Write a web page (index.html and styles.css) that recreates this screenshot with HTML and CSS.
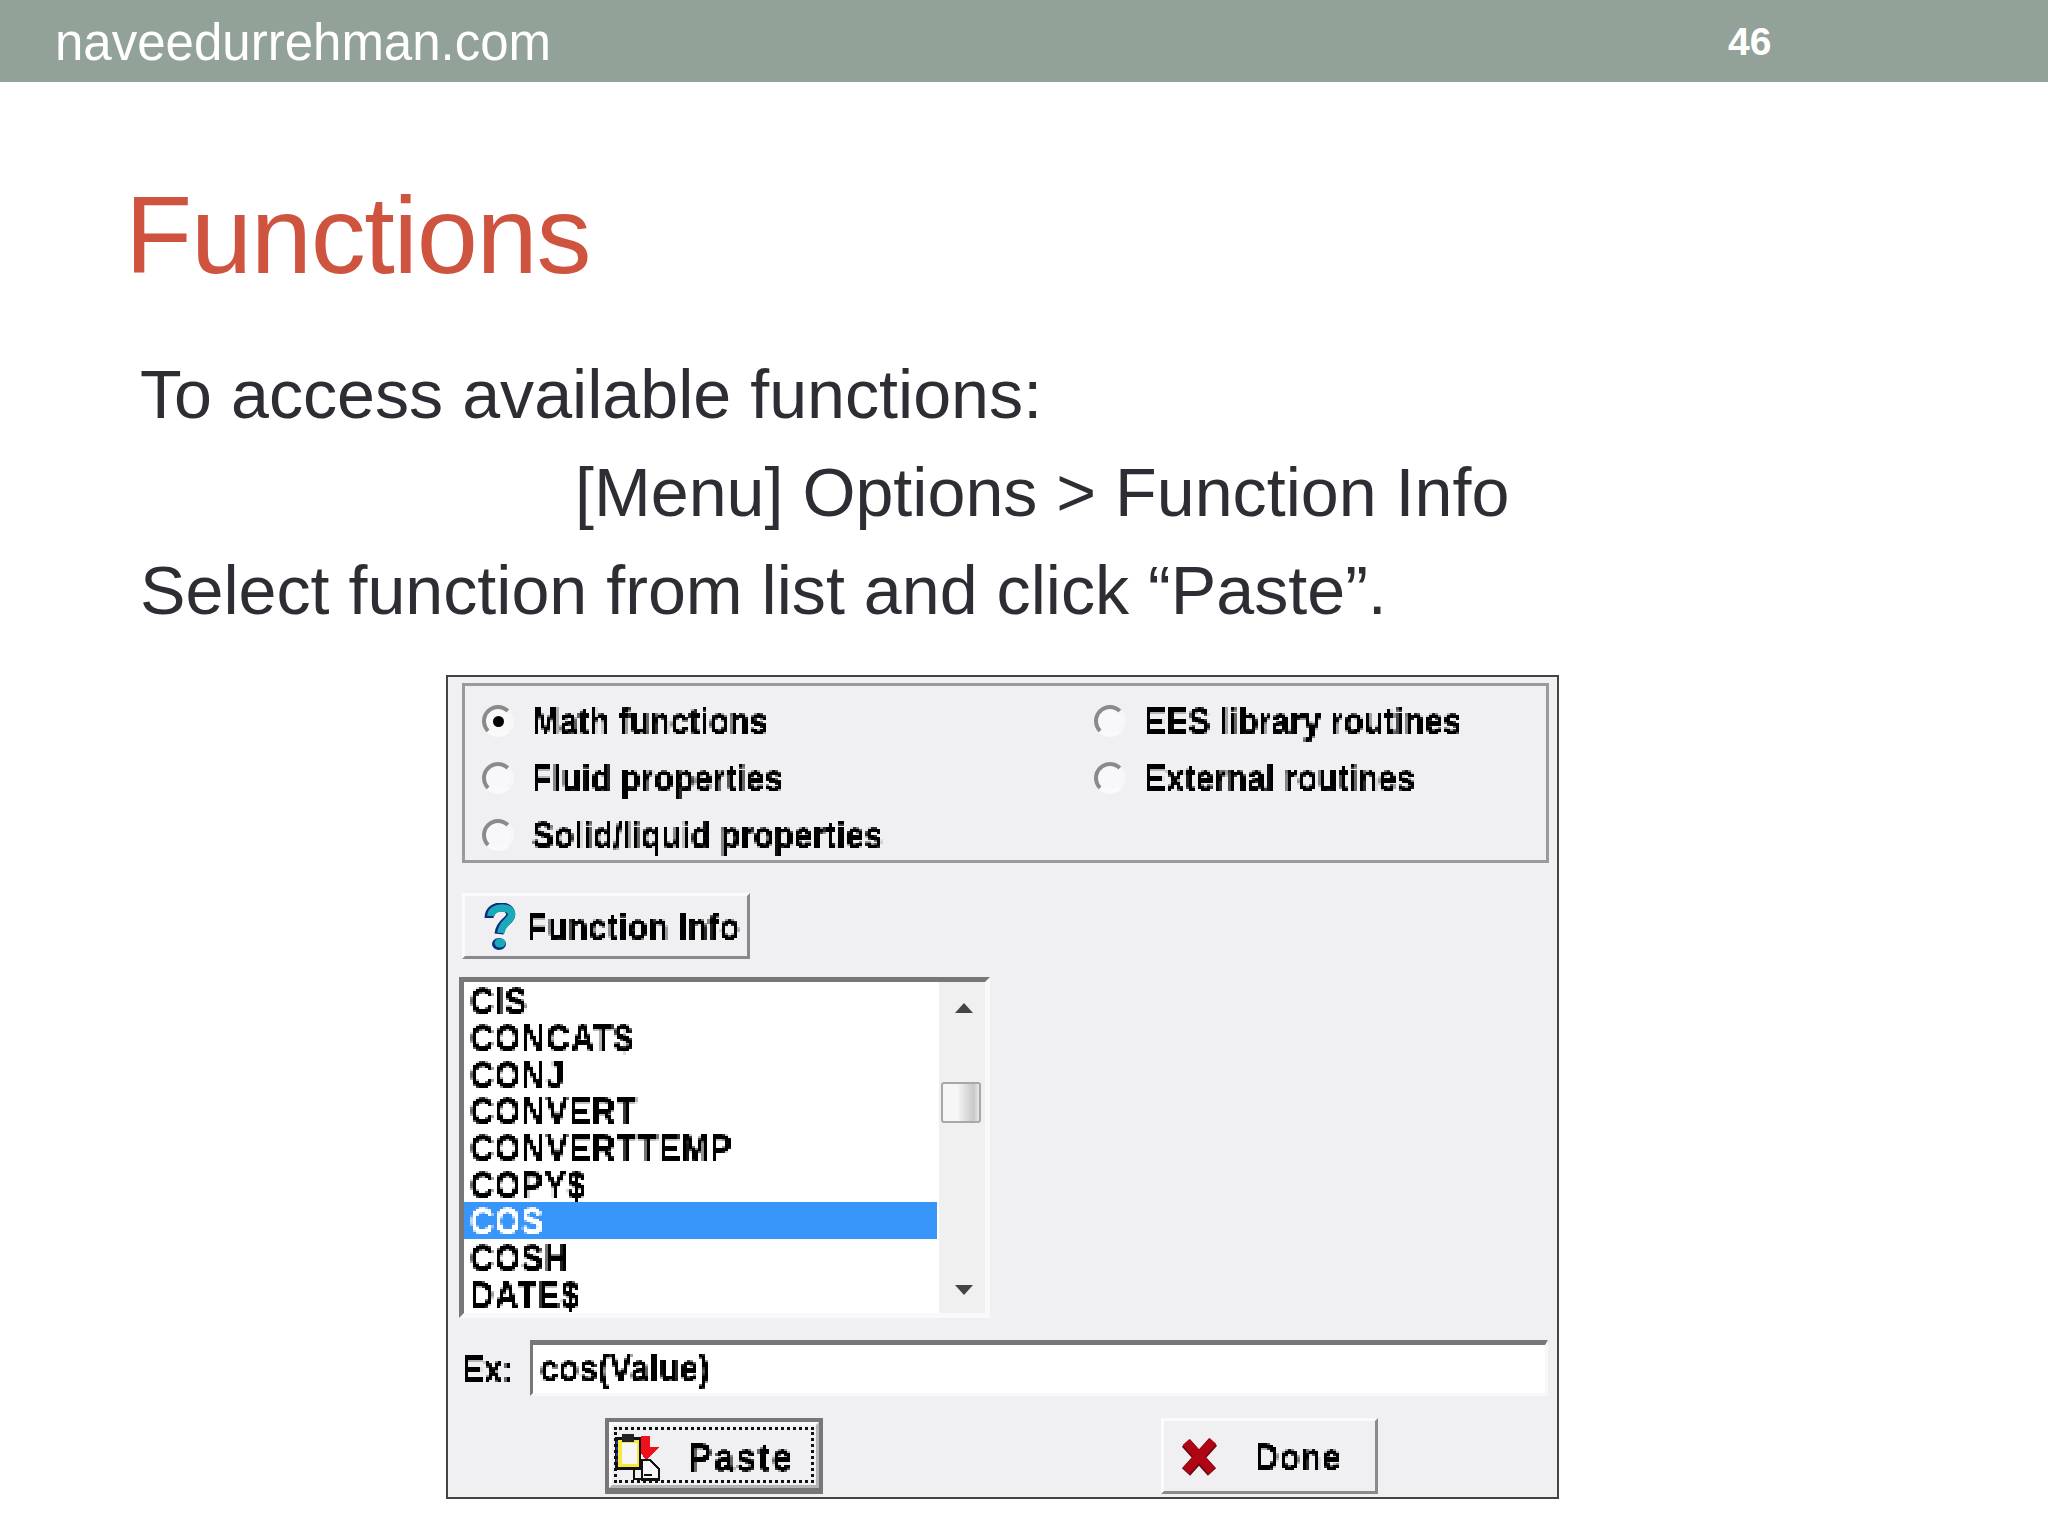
FILE: index.html
```html
<!DOCTYPE html>
<html lang="en">
<head>
<meta charset="utf-8">
<title>Functions</title>
<link rel="stylesheet" href="styles.css">
</head>
<body>
<svg class="defs" width="0" height="0" aria-hidden="true">
  <filter id="px" x="-5%" y="-15%" width="110%" height="130%" color-interpolation-filters="sRGB">
    <feFlood x="1" y="1" width="1" height="1"/>
    <feComposite width="3" height="3"/>
    <feTile result="grid"/>
    <feComposite in="SourceGraphic" in2="grid" operator="in"/>
    <feMorphology operator="dilate" radius="1"/>
    <feGaussianBlur stdDeviation="0.5"/>
  </filter>
</svg>
<header class="bar">
  <span class="site">naveedurrehman.com</span>
  <span class="num">46</span>
</header>
<main class="slide">
  <h1 class="title">Functions</h1>
  <div class="body">
    <p class="line">To access available functions:</p>
    <p class="line indent">[Menu] Options &gt; Function Info</p>
    <p class="line">Select function from list and click “Paste”.</p>
  </div>
  <section class="dialog">
    <div class="group">
      <div class="opt"><span class="radio on"></span><span class="t lab">Math functions</span></div>
      <div class="opt"><span class="radio"></span><span class="t lab">EES library routines</span></div>
      <div class="opt"><span class="radio"></span><span class="t lab">Fluid properties</span></div>
      <div class="opt"><span class="radio"></span><span class="t lab">External routines</span></div>
      <div class="opt"><span class="radio"></span><span class="t lab">Solid/liquid properties</span></div>
    </div>
    <div class="btn info">
      <svg class="ico-q" viewBox="0 0 32 47">
        <g fill="none">
          <path d="M5 15C5 7 11 4 17 4C25 4 28 9 26 14C24 19 16 20 15 31" stroke="#0b2a80" stroke-width="9"/>
          <path d="M7 13C7 8 12 5 18 5C26 5 29 9 27 14C25 19 18 20 17 30" stroke="#1aa9b8" stroke-width="7.5"/>
        </g>
        <ellipse cx="15" cy="41" rx="7" ry="6" fill="#0b2a80"/>
        <ellipse cx="16" cy="40" rx="5.5" ry="4.5" fill="#1aa9b8"/>
      </svg>
      <span class="t fi">Function Info</span>
    </div>
    <div class="list">
      <div class="rows">
        <div class="row"><span class="t caps">CIS</span></div>
        <div class="row"><span class="t caps">CONCAT$</span></div>
        <div class="row"><span class="t caps">CONJ</span></div>
        <div class="row"><span class="t caps">CONVERT</span></div>
        <div class="row"><span class="t caps">CONVERTTEMP</span></div>
        <div class="row"><span class="t caps">COPY$</span></div>
        <div class="row sel"><span class="t caps">COS</span></div>
        <div class="row"><span class="t caps">COSH</span></div>
        <div class="row"><span class="t caps">DATE$</span></div>
      </div>
      <div class="scroll">
        <span class="arrow up"></span>
        <span class="thumb"></span>
        <span class="arrow down"></span>
      </div>
    </div>
    <div class="ex">
      <span class="t ex-label">Ex:</span>
      <div class="input"><span class="t val">cos(Value)</span></div>
    </div>
    <div class="actions">
      <div class="paste">
        <div class="paste-in">
          <div class="focus">
            <svg class="ico-p" viewBox="0 0 46 50" shape-rendering="crispEdges">
              <rect x="1" y="4" width="26" height="33" fill="#111"/>
              <rect x="4" y="7" width="21" height="27" fill="#f3ea3a"/>
              <rect x="8" y="10" width="15" height="21" fill="#f7f7f7"/>
              <rect x="8" y="1" width="12" height="8" fill="#222"/>
              <path d="M2 8h2v3H2zM2 14h2v3H2zM2 20h2v3H2zM2 26h2v3H2z" fill="#1a2fb0"/>
              <path d="M27 3h9v11h9l-13 13L27 20z" fill="#f0101a"/>
              <path d="M28 27h8l9 9v11H28z" fill="#f7f7f7" stroke="#111" stroke-width="2"/>
              <path d="M21 37v8h24v2H19V37zM30 41h8v2h-8z" fill="#111"/>
            </svg>
            <span class="t big">Paste</span>
          </div>
        </div>
      </div>
      <div class="btn done">
        <svg class="ico-x" viewBox="0 0 38 42">
          <path d="M6 7L32 36M33 6L6 36" fill="none" stroke="#6a0a10" stroke-width="11" transform="translate(0 1)"/>
          <path d="M6 7L32 36M33 6L6 36" fill="none" stroke="#b00514" stroke-width="9"/>
        </svg>
        <span class="t wide">Done</span>
      </div>
    </div>
  </section>
</main>
</body>
</html>
```
FILE: styles.css
```css
* { box-sizing: border-box; }
html, body { margin: 0; padding: 0; }
body {
  width: 2048px;
  height: 1536px;
  overflow: hidden;
  background: #fff;
  font-family: "Liberation Sans", Arial, sans-serif;
}
.defs { display: block; height: 0; }

.bar {
  height: 82px;
  background: #93a299;
  color: #fff;
  display: flex;
  align-items: center;
  padding: 2px 0 0 55px;
}
.site { font-size: 51px; width: 1673px; }
.num { font-size: 39px; font-weight: bold; }

.slide { display: flex; flex-direction: column; }
.title {
  margin: 93px 0 0 125px;
  font-size: 110px;
  font-weight: normal;
  letter-spacing: -1.3px;
  line-height: 120px;
  color: #cf543f;
}
.body { margin: 50px 0 0 140px; color: #2e2d33; font-size: 68.2px; }
.line { margin: 0; line-height: 98px; }
.indent { padding-left: 435px; }

.dialog {
  margin: 36px 0 0 446px;
  width: 1113px;
  border: 2px solid #444;
  background: #f0eff2;
  padding: 6px 8px 3px 11px;
  color: #000;
}
.t {
  display: inline-block;
  font-size: 33px;
  font-weight: bold;
  line-height: 32px;
  padding-top: 4px;
  transform: scaleY(1.1);
  filter: url(#px);
}
.lab { letter-spacing: 0.1px; }
.caps { letter-spacing: 0.9px; line-height: 29px; padding-top: 3px; }
.fi { letter-spacing: 0.3px; }
.val { letter-spacing: 0.5px; padding-top: 0; }
.big { font-size: 36px; letter-spacing: 2px; padding-top: 6px; }
.wide { letter-spacing: 1px; }

.group {
  margin-left: 3px;
  height: 180px;
  border: 3px solid #9a9a9c;
  padding: 19px 16px 10px 17px;
  display: grid;
  grid-template-columns: 612px 1fr;
  grid-auto-rows: 30px;
  row-gap: 27px;
}
.opt { display: flex; align-items: center; gap: 18px; }
.radio {
  flex: none;
  width: 32px;
  height: 32px;
  margin-top: 2px;
  border-radius: 50%;
  border: 4px solid;
  border-color: #8a8a8a #f6f6f6 #fafafa #8a8a8a;
  background: #f8f8fa;
  display: flex;
  align-items: center;
  justify-content: center;
}
.radio.on::after {
  content: "";
  width: 11px;
  height: 11px;
  border-radius: 50%;
  background: #000;
}

.btn {
  display: flex;
  align-items: center;
  border: 3px solid;
  border-color: #fbfbfb #8a8a8c #8a8a8c #fbfbfb;
}
.info {
  margin: 30px 0 0 3px;
  width: 288px;
  height: 66px;
  padding-left: 19px;
  gap: 11px;
}
.ico-q { width: 32px; height: 47px; flex: none; }

.list {
  margin-top: 18px;
  width: 531px;
  height: 341px;
  display: flex;
  border: 5px solid;
  border-color: #77777a #f9f9f9 #f9f9f9 #77777a;
  background: #fff;
}
.rows { width: 473px; }
.row { height: 36.7px; padding-left: 6px; display: flex; align-items: center; }
.sel { background: #3896fb; color: #fff; }
.scroll {
  margin-left: 2px;
  width: 46px;
  background: #f0f0f0;
  display: flex;
  flex-direction: column;
  align-items: center;
}
.arrow { width: 0; height: 0; border-left: 9px solid transparent; border-right: 9px solid transparent; flex: none; }
.up { margin-top: 21px; margin-left: 3px; border-bottom: 10px solid #444; }
.thumb {
  margin: 69px 2px 0 0;
  width: 40px;
  height: 41px;
  flex: none;
  border: 2px solid #a8a8aa;
  border-radius: 3px;
  background: linear-gradient(90deg, #f6f6f6 40%, #c8c8ca 85%, #e8e8e8);
}
.down { margin-top: 162px; margin-left: 3px; border-top: 10px solid #444; }

.ex { margin-top: 22px; display: flex; align-items: center; }
.ex-label { margin-left: 3px; width: 68px; flex: none; }
.input {
  width: 1018px;
  height: 56px;
  background: #fff;
  border: 3px solid;
  border-color: #77777a #f8f8f8 #f8f8f8 #77777a;
  border-top-width: 5px;
  padding-left: 7px;
  display: flex;
  align-items: center;
}

.actions { margin: 22px 0 0 146px; display: flex; gap: 338px; }
.paste {
  width: 218px;
  height: 76px;
  border: 4px solid #77777a;
  border-bottom-width: 6px;
}
.paste-in {
  height: 100%;
  border: 3px solid;
  border-color: #fbfbfb #b4b4b6 #b4b4b6 #fbfbfb;
  padding: 2px 2px;
}
.focus {
  height: 100%;
  border: 3px dotted #111;
  display: flex;
  align-items: center;
  gap: 28px;
}
.ico-p { width: 46px; height: 50px; flex: none; margin: 6px 0 0 -3px; }
.done { width: 217px; height: 76px; padding-left: 16px; gap: 37px; }
.ico-x { width: 38px; height: 42px; flex: none; }
```
